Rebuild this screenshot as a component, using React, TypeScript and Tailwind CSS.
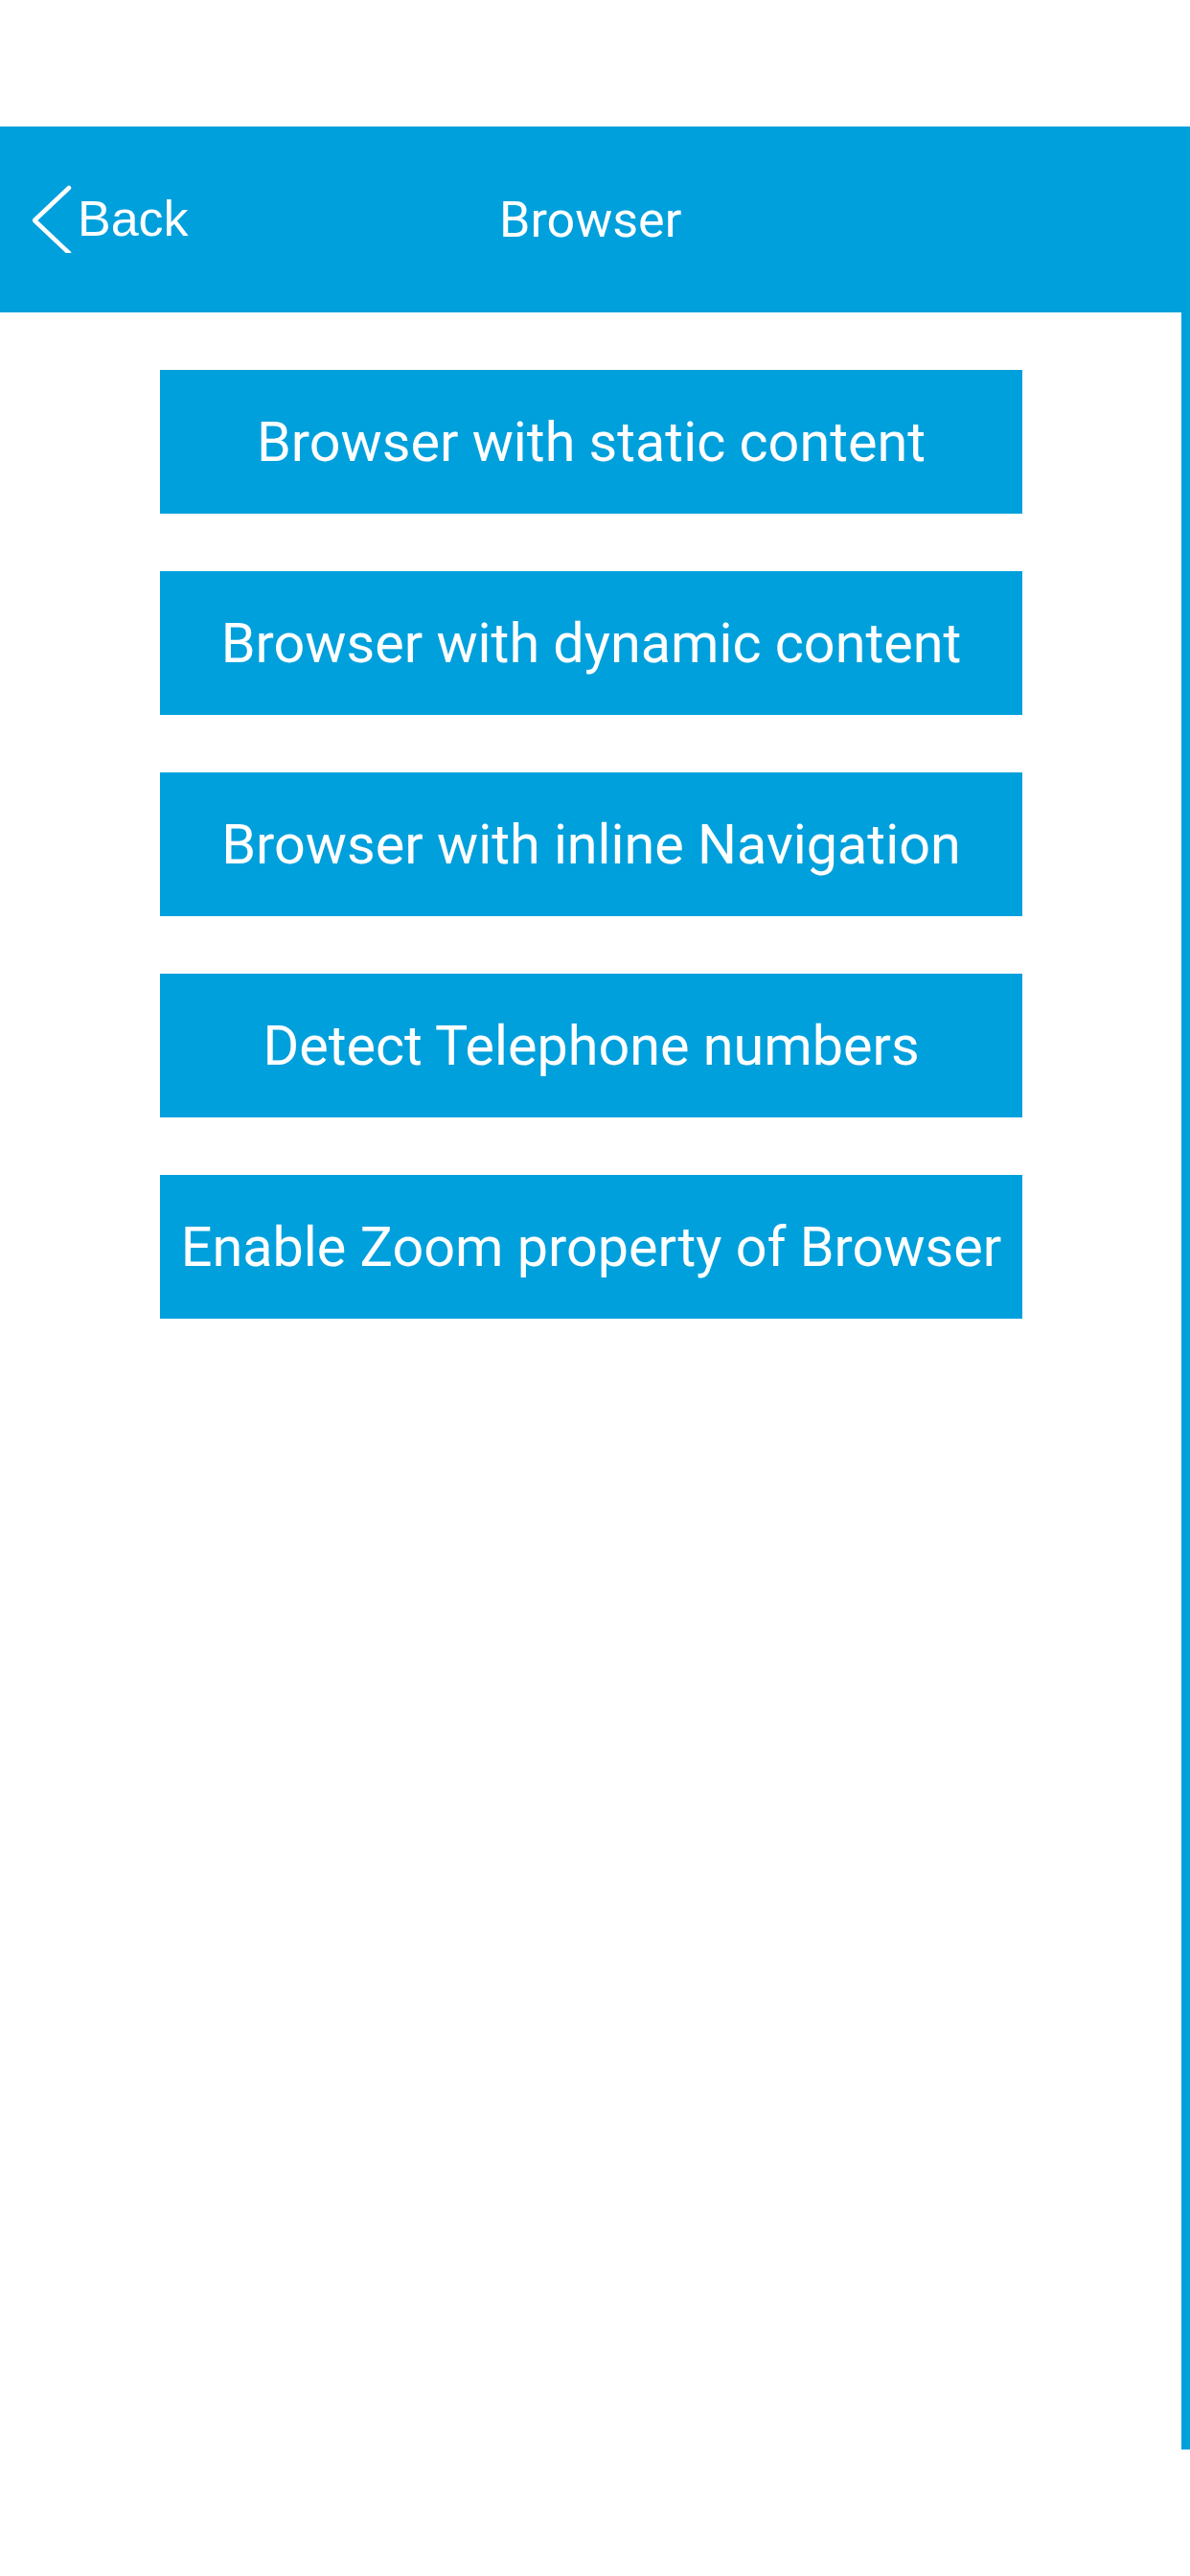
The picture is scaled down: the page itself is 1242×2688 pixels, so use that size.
const ITEMS = [
  'Browser with static content',
  'Browser with dynamic content',
  'Browser with inline Navigation',
  'Detect Telephone numbers',
  'Enable Zoom property of Browser',
];

export default function App() {
  return (
    <div className="w-[1242px] h-[2688px] bg-white pt-[132px] flex flex-col">
      <header className="h-[194px] bg-[#00a0dc] flex items-center relative">
        <button type="button" className="flex items-center pl-[34px] text-white">
          <svg width="42" height="72" viewBox="0 0 42 72" className="mb-[2px]">
            <polyline
              points="38,4 2,38 38,72"
              fill="none"
              stroke="#ffffff"
              strokeWidth="4.5"
              strokeLinecap="round"
              strokeLinejoin="round"
            />
          </svg>
          <span className="ml-[5px] mt-[-3px] text-[52px] leading-none font-['Liberation_Sans',Arial,sans-serif]">
            Back
          </span>
        </button>
        <h1 className="absolute left-[521px] text-white text-[52px] leading-none font-['Roboto',sans-serif] mt-[2px]">
          Browser
        </h1>
      </header>

      <div className="flex flex-1">
        <main className="flex-1 flex flex-col gap-[60px] pt-[60px] pl-[167px]">
          {ITEMS.map((label) => (
            <button
              key={label}
              type="button"
              className="w-[900px] h-[150px] bg-[#00a0dc] text-white text-[57.5px] font-['Roboto',sans-serif] whitespace-nowrap flex items-center justify-center"
            >
              <span className="mt-[2px]">{label}</span>
            </button>
          ))}
        </main>
        <div className="w-[9px] h-[2230px] bg-[#00a0dc]" />
      </div>
    </div>
  );
}
